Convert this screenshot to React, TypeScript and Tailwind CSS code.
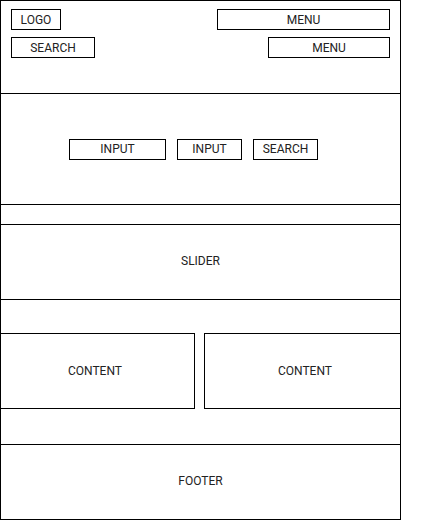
const Box = ({ className = "", children }: { className?: string; children: React.ReactNode }) => (
  <div className={`flex items-center justify-center border border-black ${className}`}>{children}</div>
);

export default function App() {
  return (
    <div className="w-[430px] h-[520px] bg-white font-['Roboto',sans-serif] text-[12px] leading-none text-[#222]">
      <div className="w-[401px] h-[520px] border border-black flex flex-col">
        {/* header */}
        <header className="h-[93px] shrink-0 border-b border-black px-[10px] pt-[8px] flex flex-col gap-[7px]">
          <div className="flex justify-between">
            <Box className="w-[50px] h-[21px]">LOGO</Box>
            <Box className="w-[173px] h-[21px]">MENU</Box>
          </div>
          <div className="flex justify-between">
            <Box className="w-[84px] h-[21px]">SEARCH</Box>
            <Box className="w-[122px] h-[21px]">MENU</Box>
          </div>
        </header>

        {/* search panel */}
        <section className="h-[111px] shrink-0 border-b border-black flex items-center pl-[68px] gap-[11px]">
          <Box className="w-[97px] h-[21px]">INPUT</Box>
          <Box className="w-[65px] h-[21px]">INPUT</Box>
          <Box className="w-[65px] h-[21px]">SEARCH</Box>
        </section>

        <div className="h-[20px] shrink-0 border-b border-black" />

        {/* slider */}
        <section className="h-[75px] shrink-0 border-b border-black flex items-center justify-center pb-[2px]">SLIDER</section>

        {/* content */}
        <section className="h-[145px] shrink-0 border-b border-black pt-[33px] flex gap-[9px]">
          <div className="w-[194px] h-[76px] border-y border-r border-black flex items-center justify-center pr-[5px]">CONTENT</div>
          <div className="flex-1 h-[76px] border-y border-l border-black flex items-center justify-center pl-[5px]">CONTENT</div>
        </section>

        {/* footer */}
        <footer className="flex-1 flex items-center justify-center pb-[3px]">FOOTER</footer>
      </div>
    </div>
  );
}
